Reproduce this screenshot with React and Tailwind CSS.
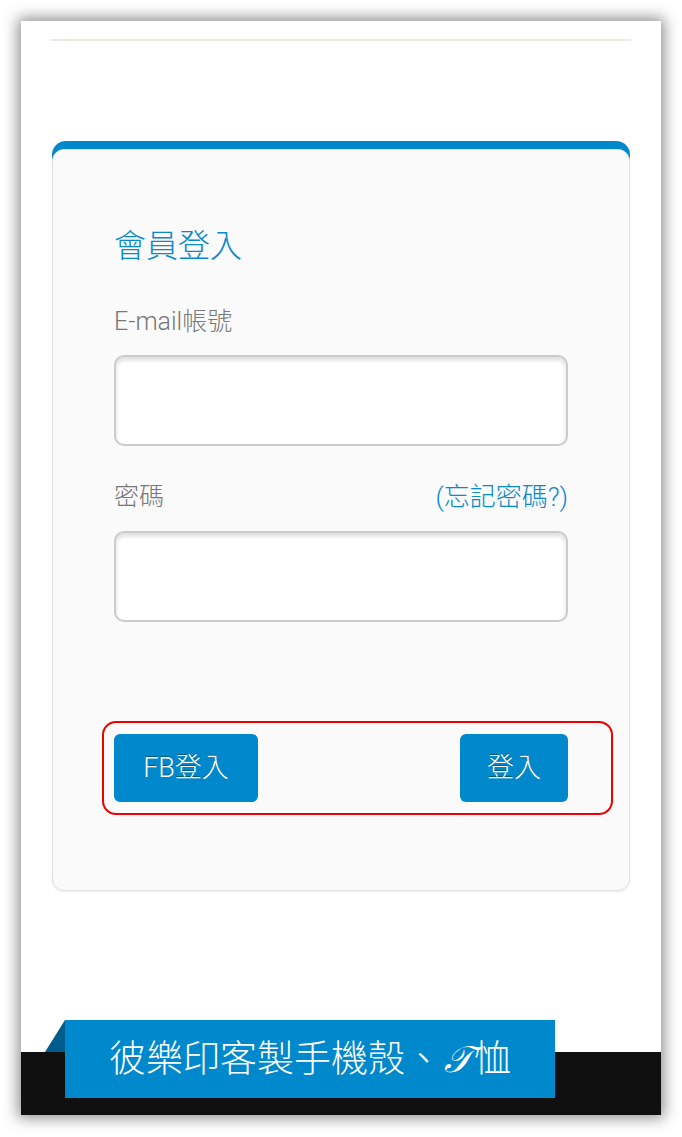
export default function App() {
  const font = { fontFamily: 'Roboto, "Noto Sans CJK TC", sans-serif' };
  return (
    <div className="min-h-[1137px] bg-white pt-[21px] pb-[21px]" style={font}>
      <div className="mx-[21px] w-[640px] bg-white shadow-[0_0_14px_3px_rgba(0,0,0,0.45)]">
        <div className="px-[30px] pt-[18px]">
          <div className="h-[2px] bg-[#ecebdd]" />
        </div>

        <div className="mt-[100px] px-[31px]">
          <div className="rounded-[14px] bg-[linear-gradient(to_bottom,#0088cc_0,#0088cc_24px,transparent_24px)] pt-[8px]">
            <div className="rounded-[12px] border border-[#e2e2e2] bg-[#fafafa] px-[61px] pt-[76px] pb-[75px] shadow-[0_1px_2px_rgba(0,0,0,0.08)]">
              <h2 className="text-[32px] leading-[40px] font-light text-[#0a88cc]">會員登入</h2>

              <label className="mt-[40px] block text-[25px] leading-[32px] font-light text-[#777]">E-mail帳號</label>
              <div className="mt-[17px] h-[91px] rounded-[10px] border-2 border-[#cbcbcb] bg-white shadow-[inset_0_3px_4px_rgba(0,0,0,0.14)]" />

              <div className="mt-[35px] flex items-center justify-between text-[25px] leading-[32px] font-light">
                <span className="text-[#777]">密碼</span>
                <span className="text-[#0a88cc] text-[26px]">(忘記密碼?)</span>
              </div>
              <div className="mt-[18px] h-[91px] rounded-[10px] border-2 border-[#cbcbcb] bg-white shadow-[inset_0_3px_4px_rgba(0,0,0,0.14)]" />

              <div className="mt-[99px] -ml-[12px] -mr-[45px] flex h-[94px] items-center justify-between rounded-[14px] border-2 border-[#ee0000] pl-[10px] pr-[43px]">
                <button className="h-[68px] w-[144px] rounded-[6px] bg-[#0088cc] text-[27px] font-light text-white [text-shadow:0_-1px_0_rgba(0,0,0,0.35)]">
                  FB登入
                </button>
                <button className="h-[68px] w-[108px] rounded-[6px] bg-[#0088cc] text-[27px] font-light text-white [text-shadow:0_-1px_0_rgba(0,0,0,0.35)]">
                  登入
                </button>
              </div>
            </div>
          </div>
        </div>

        <div className="relative mt-[129px] h-[95px]">
          <div className="absolute top-[32px] left-0 right-0 h-[63px] bg-[#0f0f0f]" />
          <svg className="absolute top-0 left-[24px]" width="20" height="32" viewBox="0 0 20 32">
            <polygon points="20,0 0,32 20,32" fill="#005c8c" />
          </svg>
          <div className="absolute top-0 left-[44px] flex h-[78px] w-[490px] items-center justify-center bg-[#0088cc] text-[37px] leading-none font-light text-white">
            <span>彼樂印客製手機殼、</span>
            <span className="px-[2px] font-['Liberation_Serif'] italic font-light">𝒯</span>
            <span>恤</span>
          </div>
        </div>
      </div>
    </div>
  );
}
